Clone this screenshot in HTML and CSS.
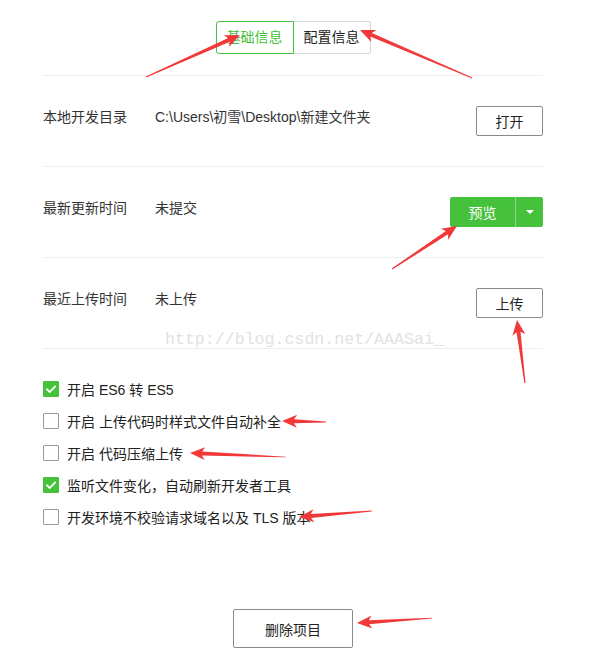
FILE: index.html
```html
<!DOCTYPE html>
<html lang="zh-CN">
<head>
<meta charset="utf-8">
<title>项目信息</title>
<link rel="stylesheet" href="styles.css">
</head>
<body>
<div class="page">
  <div class="tabs">
    <div class="tab tab-active">基础信息</div>
    <div class="tab">配置信息</div>
  </div>

  <div class="row">
    <div class="label">本地开发目录</div>
    <div class="value">C:\Users\初雪\Desktop\新建文件夹</div>
    <button class="btn">打开</button>
  </div>

  <div class="row">
    <div class="label">最新更新时间</div>
    <div class="value">未提交</div>
    <div class="split">
      <button class="split-main">预览</button>
      <button class="split-caret"><span class="caret"></span></button>
    </div>
  </div>

  <div class="row">
    <div class="label">最近上传时间</div>
    <div class="value">未上传</div>
    <button class="btn">上传</button>
  </div>

  <ul class="checks">
    <li class="check"><span class="box box-on"><svg viewBox="0 0 16 16" width="16" height="16"><path d="M3.8 8.2 L6.8 11 L12.2 5.4" fill="none" stroke="#fff" stroke-width="1.8" stroke-linecap="round" stroke-linejoin="round"/></svg></span>开启 ES6 转 ES5</li>
    <li class="check"><span class="box"></span>开启 上传代码时样式文件自动补全</li>
    <li class="check"><span class="box"></span>开启 代码压缩上传</li>
    <li class="check"><span class="box box-on"><svg viewBox="0 0 16 16" width="16" height="16"><path d="M3.8 8.2 L6.8 11 L12.2 5.4" fill="none" stroke="#fff" stroke-width="1.8" stroke-linecap="round" stroke-linejoin="round"/></svg></span>监听文件变化，自动刷新开发者工具</li>
    <li class="check"><span class="box"></span>开发环境不校验请求域名以及 TLS 版本</li>
  </ul>

  <div class="footer">
    <button class="btn btn-del">删除项目</button>
  </div>
</div>

<div class="watermark">http://blog.csdn.net/AAASai_</div>

<svg class="arrows" width="592" height="658" viewBox="0 0 592 658">
  <g fill="#f2393a">
    <g transform="translate(240,35) rotate(-24.1)"><polygon points="-103,-0.5 -12,-2 -15,-6.5 0,0 -15,6.5 -12,2 -103,0.5"/></g>
    <g transform="translate(360,30) rotate(-156.8)"><polygon points="-122,-0.5 -12,-2 -15,-6.5 0,0 -15,6.5 -12,2 -122,0.5"/></g>
    <g transform="translate(457,226) rotate(-33.5)"><polygon points="-78,-0.6 -12,-2 -15,-6.5 0,0 -15,6.5 -12,2 -78,0.6"/></g>
    <g transform="translate(517,320) rotate(-97.2)"><polygon points="-63.5,-0.6 -12,-2 -15,-6.5 0,0 -15,6.5 -12,2 -63.5,0.6"/></g>
    <g transform="translate(282,421) rotate(181.3)"><polygon points="-44,-0.5 -12,-2 -15,-6.5 0,0 -15,6.5 -12,2 -44,0.5"/></g>
    <g transform="translate(190,453) rotate(182.4)"><polygon points="-96,-0.3 -12,-2 -15,-6.5 0,0 -15,6.5 -12,2 -96,0.3"/></g>
    <g transform="translate(299,517) rotate(175.3)"><polygon points="-73,-0.4 -12,-2 -15,-6.5 0,0 -15,6.5 -12,2 -73,0.4"/></g>
    <g transform="translate(357,623) rotate(176.2)"><polygon points="-75,-0.4 -12,-2 -15,-6.5 0,0 -15,6.5 -12,2 -75,0.4"/></g>
  </g>
</svg>
</body>
</html>
```
FILE: styles.css
```css
* { box-sizing: border-box; }
html, body {
  margin: 0;
  padding: 0;
  background: #fff;
}
body {
  position: relative;
  width: 592px;
  height: 658px;
  overflow: hidden;
  font-family: "Liberation Sans", "Noto Sans CJK SC", sans-serif;
  font-size: 14px;
  color: #333;
}
.page {
  width: 500px;
  margin-left: 43px;
}
.tabs {
  display: flex;
  justify-content: center;
  padding-top: 21px;
  height: 76px;
  border-bottom: 1px solid #eeeeee;
}
.tab {
  width: 77px;
  height: 33px;
  line-height: 31px;
  text-align: center;
  border: 1px solid #d6d6d6;
  color: #222;
  font-size: 14px;
}
.tab:first-child { border-radius: 3px 0 0 3px; }
.tab:last-child { border-radius: 0 3px 3px 0; border-left: none; }
.tab-active {
  width: 78px;
  border-color: #45bf3c;
  color: #45bf3c;
}
.row {
  display: flex;
  align-items: flex-start;
  height: 91px;
  padding-top: 30px;
  border-bottom: 1px solid #eeeeee;
}
.label {
  width: 112px;
  line-height: 22px;
  color: #333;
}
.value {
  flex: 1;
  line-height: 22px;
  color: #333;
}
.btn {
  width: 67px;
  height: 30px;
  padding: 0;
  border: 1px solid #8a8a8a;
  border-radius: 2px;
  background: #fff;
  font-family: inherit;
  font-size: 14px;
  color: #222;
  cursor: pointer;
}
.split {
  display: flex;
  height: 30px;
  border-radius: 2px;
  overflow: hidden;
}
.split-main, .split-caret {
  height: 30px;
  padding: 0;
  border: none;
  background: #46c13c;
  color: #fff;
  font-family: inherit;
  font-size: 14px;
}
.split-main {
  width: 66px;
  border-right: 1px solid #8fd889;
}
.split-caret {
  width: 27px;
  display: flex;
  align-items: center;
  justify-content: center;
}
.caret {
  width: 0;
  height: 0;
  border-left: 4px solid transparent;
  border-right: 4px solid transparent;
  border-top: 4px solid #fff;
}
.checks {
  list-style: none;
  margin: 0;
  padding: 24px 0 0;
}
.check {
  display: flex;
  align-items: center;
  height: 32px;
  color: #222;
}
.box {
  width: 16px;
  height: 16px;
  margin-right: 8px;
  border: 1px solid #9a9a9a;
  border-radius: 1px;
  background: #fff;
  display: flex;
  align-items: center;
  justify-content: center;
}
.box-on {
  border: none;
  background: #46c13c;
}
.footer {
  display: flex;
  justify-content: center;
  padding-top: 76px;
  padding-left: 0;
}
.btn-del {
  width: 120px;
  height: 39px;
  font-size: 14px;
}
.watermark {
  position: absolute;
  left: 165px;
  top: 330px;
  font-family: "Liberation Mono", monospace;
  font-size: 16.6px;
  line-height: 20px;
  color: #e2e2e2;
  pointer-events: none;
}
.arrows {
  position: absolute;
  left: 0;
  top: 0;
  pointer-events: none;
}
```
